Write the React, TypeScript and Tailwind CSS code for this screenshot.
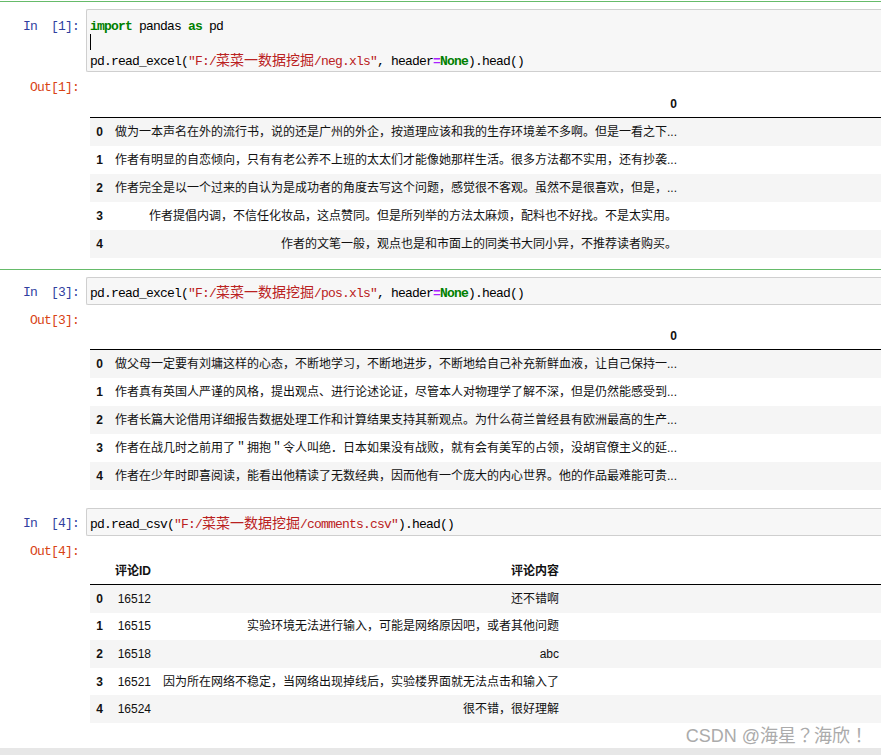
import React from "react";

type Piece = { t: string; c?: string; cjk?: boolean };

const KW = "text-[#008000] font-bold";
const STR = "text-[#ba2121]";
const OP = "text-[#aa22ff] font-bold";

function CodeLine({ parts }: { parts: Piece[] }) {
  return (
    <div className="h-[17px] leading-[17px] whitespace-pre">
      {parts.map((p, i) =>
        p.cjk ? (
          <span
            key={i}
            className={`font-['Noto_Sans_CJK_SC',sans-serif] text-[14px] leading-[14px] tracking-normal ${p.c ?? ""}`}
          >
            {p.t}
          </span>
        ) : (
          <span key={i} className={`tracking-[-0.8px] ${p.c ?? ""}`}>
            {p.t}
          </span>
        )
      )}
    </div>
  );
}

function readLine(file: string, fn: string, extra: Piece[]): Piece[] {
  return [
    { t: `pd.${fn}(` },
    { t: '"F:/', c: STR },
    { t: "菜菜一数据挖掘", c: STR, cjk: true },
    { t: `/${file}"`, c: STR },
    ...extra,
  ];
}

const headerNone: Piece[] = [
  { t: ", header" },
  { t: "=", c: OP },
  { t: "None", c: KW },
  { t: ").head()" },
];

function Cell({
  n,
  lines,
  green,
  pb,
  children,
}: {
  n: number;
  lines: Piece[][];
  green?: boolean;
  pb: string;
  children: React.ReactNode;
}) {
  const multi = lines.length > 1;
  return (
    <div className={pb}>
      <div className={green ? "h-px bg-[#66bb6a]" : "h-px"} />
      <div className="pt-[7px]">
        <div className="flex">
          <div
            className={`w-[79px] mr-[7px] shrink-0 ${multi ? "pt-[9px]" : "pt-[7px]"} text-right leading-[17px] whitespace-pre text-[13px] tracking-[-0.8px] text-[#303f9f]`}
          >
            {`In  [${n}]:`}
          </div>
          <div
            className={`flex-1 border border-r-0 border-[#cfcfcf] rounded-l-[2px] bg-[#f7f7f7] pl-[3px] ${multi ? "pt-[8px] pb-[2px]" : "pt-[6px] pb-[3px]"} text-[13px] text-black`}
          >
            {lines.map((l, i) => (
              <CodeLine key={i} parts={l} />
            ))}
          </div>
        </div>
        <div className="flex mt-[7px]">
          <div className="w-[79px] mr-[7px] shrink-0 text-right leading-[17px] whitespace-pre text-[13px] tracking-[-0.8px] text-[#d84315]">
            {`Out[${n}]:`}
          </div>
          <div className="flex-1 pl-[4px]">{children}</div>
        </div>
      </div>
    </div>
  );
}

function Table({
  cols,
  heads,
  rows,
  mt,
  rowH,
}: {
  cols: string;
  heads: string[];
  rows: string[][];
  mt: string;
  rowH: string;
}) {
  return (
    <div
      className={`${mt} font-['Liberation_Sans','Noto_Sans_CJK_SC',sans-serif] text-[12px] text-[#111]`}
    >
      <div className={`grid ${cols} h-[28px] border-b border-black items-center font-bold`}>
        {heads.map((h, i) => (
          <div key={i} className="px-[6px] text-right whitespace-nowrap">
            {h}
          </div>
        ))}
      </div>
      {rows.map((r, ri) => (
        <div
          key={ri}
          className={`grid ${cols} ${rowH} items-center ${ri % 2 === 0 ? "bg-[#f5f5f5]" : "bg-white"}`}
        >
          <div className="px-[6px] text-right font-bold">{ri}</div>
          {r.map((c, ci) => (
            <div key={ci} className="px-[6px] text-right whitespace-nowrap overflow-hidden">
              {c}
            </div>
          ))}
        </div>
      ))}
    </div>
  );
}

const neg = [
  "做为一本声名在外的流行书，说的还是广州的外企，按道理应该和我的生存环境差不多啊。但是一看之下...",
  "作者有明显的自恋倾向，只有有老公养不上班的太太们才能像她那样生活。很多方法都不实用，还有抄袭...",
  "作者完全是以一个过来的自认为是成功者的角度去写这个问题，感觉很不客观。虽然不是很喜欢，但是，...",
  "作者提倡内调，不信任化妆品，这点赞同。但是所列举的方法太麻烦，配料也不好找。不是太实用。",
  "作者的文笔一般，观点也是和市面上的同类书大同小异，不推荐读者购买。",
];

const pos = [
  "做父母一定要有刘墉这样的心态，不断地学习，不断地进步，不断地给自己补充新鲜血液，让自己保持一...",
  "作者真有英国人严谨的风格，提出观点、进行论述论证，尽管本人对物理学了解不深，但是仍然能感受到...",
  "作者长篇大论借用详细报告数据处理工作和计算结果支持其新观点。为什么荷兰曾经县有欧洲最高的生产...",
  "作者在战几时之前用了＂拥抱＂令人叫绝．日本如果没有战败，就有会有美军的占领，没胡官僚主义的延...",
  "作者在少年时即喜阅读，能看出他精读了无数经典，因而他有一个庞大的内心世界。他的作品最难能可贵...",
];

const comments = [
  ["16512", "还不错啊"],
  ["16515", "实验环境无法进行输入，可能是网络原因吧，或者其他问题"],
  ["16518", "abc"],
  ["16521", "因为所在网络不稳定，当网络出现掉线后，实验楼界面就无法点击和输入了"],
  ["16524", "很不错，很好理解"],
];

export default function App() {
  return (
    <div className="relative w-full min-h-[755px] bg-white overflow-hidden font-['Liberation_Mono','Noto_Sans_CJK_SC',monospace] pt-px">
      <Cell
        n={1}
        green
        pb="pb-[11px]"
        lines={[
          [{ t: "import", c: KW }, { t: " pandas " }, { t: "as", c: KW }, { t: " pd" }],
          [],
          readLine("neg.xls", "read_excel", headerNone),
        ]}
      >
        <Table
          cols="grid-cols-[19px_574px]"
          heads={["", "0"]}
          rows={neg.map((s) => [s])}
          mt="mt-[11px]"
          rowH="h-[28px]"
        />
      </Cell>
      <Cell n={3} green pb="pb-[10px]" lines={[readLine("pos.xls", "read_excel", headerNone)]}>
        <Table
          cols="grid-cols-[19px_574px]"
          heads={["", "0"]}
          rows={pos.map((s) => [s])}
          mt="mt-[10px]"
          rowH="h-[28px]"
        />
      </Cell>
      <Cell n={4} pb="pb-[10px]" lines={[readLine("comments.csv", "read_csv", [{ t: ").head()" }])]}>
        <Table
          cols="grid-cols-[19px_48px_408px]"
          heads={["", "评论ID", "评论内容"]}
          rows={comments}
          mt="mt-[14px]"
          rowH="h-[27.6px]"
        />
      </Cell>
      <div className="mt-[15px] h-[10px] bg-[#e7e7e7]" />
      <div className="absolute right-[13px] top-[725px] text-[18px] leading-[22px] text-[#ababab] font-['Liberation_Sans','Noto_Sans_CJK_JP',sans-serif]">
        CSDN @海星？海欣！
      </div>
      <div className="absolute left-[90px] top-[34px] h-[16px] w-px bg-black" />
    </div>
  );
}
